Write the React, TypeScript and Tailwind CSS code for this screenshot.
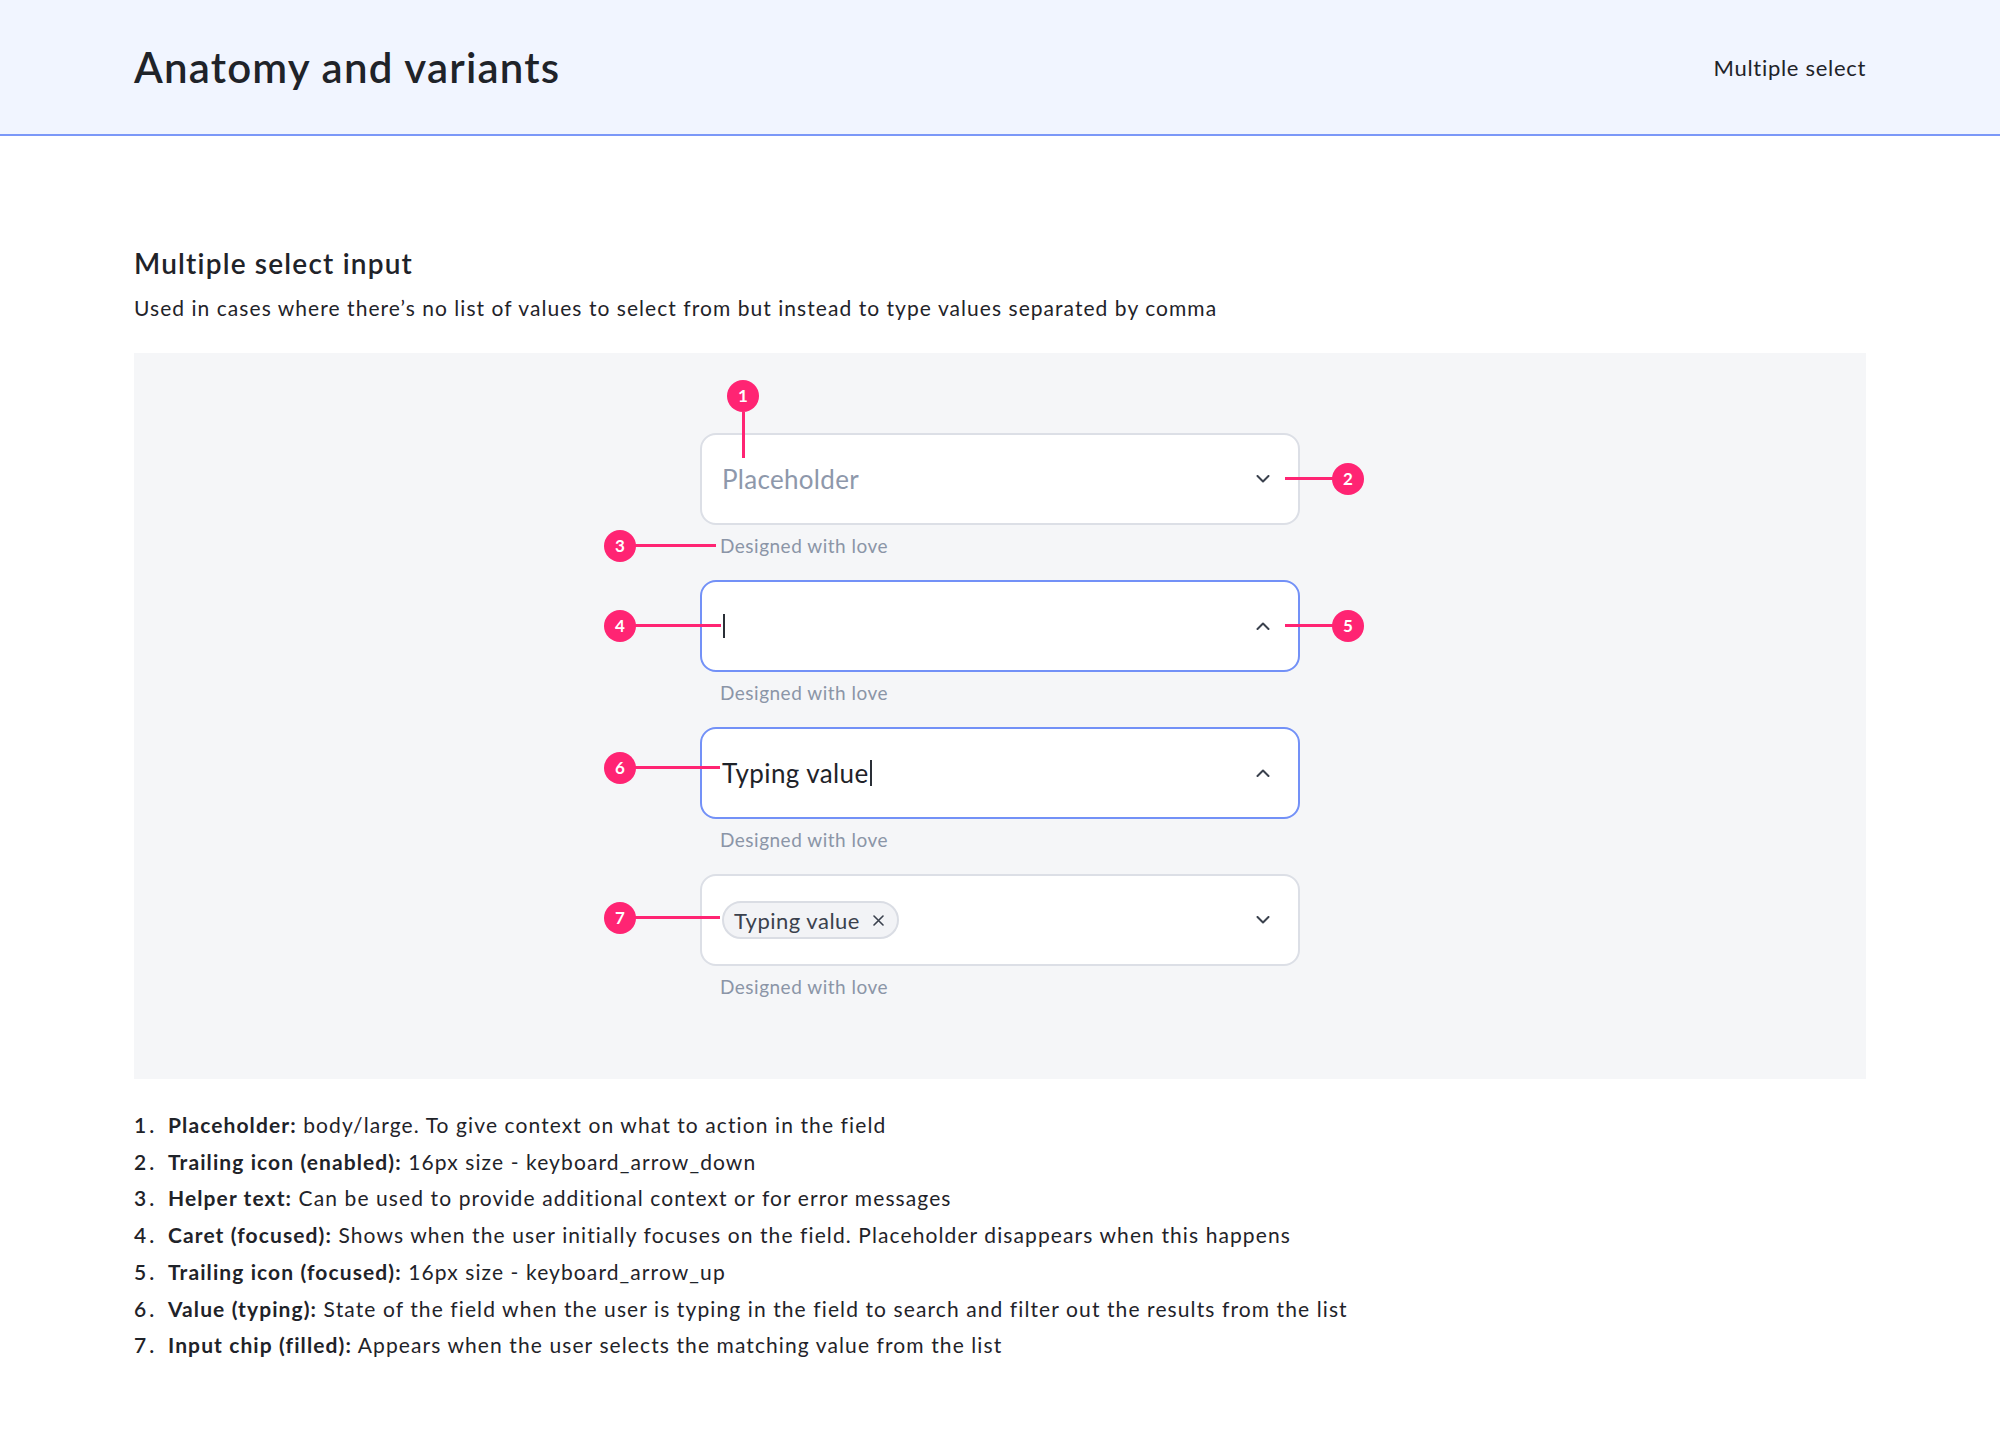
import React from 'react';

const PINK = 'bg-[#ff2473]';

function Badge({ n, className }: { n: number; className: string }) {
  return (
    <div
      className={`absolute w-8 h-8 rounded-full ${PINK} text-white text-[17px] font-bold flex items-center justify-center ${className}`}
    >
      {n}
    </div>
  );
}

function Chevron({ up = false }: { up?: boolean }) {
  return (
    <svg width="14" height="8" viewBox="0 0 14 8" className="shrink-0">
      <polyline
        points={up ? '1.5,7 7,1.5 12.5,7' : '1.5,1 7,6.5 12.5,1'}
        fill="none"
        stroke="#3a414d"
        strokeWidth="2"
        strokeLinecap="round"
        strokeLinejoin="round"
      />
    </svg>
  );
}

function Helper() {
  return (
    <div className="mt-[9px] pl-[20px] text-[19px] leading-[24px] tracking-[0.5px] text-[#8b95a7]">
      Designed with love
    </div>
  );
}

const NOTES: [string, string][] = [
  ['Placeholder:', 'body/large. To give context on what to action in the field'],
  ['Trailing icon (enabled):', '16px size - keyboard_arrow_down'],
  ['Helper text:', 'Can be used to provide additional context or for error messages'],
  ['Caret (focused):', 'Shows when the user initially focuses on the field. Placeholder disappears when this happens'],
  ['Trailing icon (focused):', '16px size - keyboard_arrow_up'],
  ['Value (typing):', 'State of the field when the user is typing in the field to search and filter out the results from the list'],
  ['Input chip (filled):', 'Appears when the user selects the matching value from the list'],
];

export default function App() {
  const field = 'h-[92px] rounded-[16px] border-2 bg-white flex items-center justify-between pl-[20px] pr-[28px]';

  return (
    <div className="min-h-screen bg-white font-['Lato',sans-serif] text-[#1f2329]">
      <header className="h-[136px] bg-[#f1f5ff] border-b-2 border-[#7b98f8] px-[134px] flex items-center justify-between">
        <h1 className="text-[42px] font-semibold tracking-[1.2px]">Anatomy and variants</h1>
        <span className="text-[22px] tracking-[0.7px]">Multiple select</span>
      </header>

      <main className="px-[134px] pb-[60px]">
        <h2 className="mt-[111px] text-[28px] leading-[32px] font-semibold tracking-[1.2px]">Multiple select input</h2>
        <p className="mt-[14px] text-[21px] leading-[30px] tracking-[1.05px]">
          Used in cases where there’s no list of values to select from but instead to type values separated by comma
        </p>

        <div className="mt-[30px] bg-[#f5f6f8] pt-[80px] pb-[80px] flex flex-col items-center gap-[22px]">
          {/* 1 - placeholder */}
          <div className="relative w-[600px]">
            <div className={`${field} border-[#dcdfe6]`}>
              <span className="text-[26px] tracking-[0.3px] text-[#8e98ab]">Placeholder</span>
              <Chevron />
            </div>
            <Helper />
            <Badge n={1} className="left-[27px] -top-[53px]" />
            <div className={`absolute left-[42px] -top-[21px] w-[3px] h-[46px] ${PINK}`} />
            <Badge n={2} className="left-[632px] top-[30px]" />
            <div className={`absolute left-[585px] top-[44px] w-[48px] h-[3px] ${PINK}`} />
            <Badge n={3} className="-left-[96px] top-[97px]" />
            <div className={`absolute -left-[65px] top-[111px] w-[81px] h-[3px] ${PINK}`} />
          </div>

          {/* 2 - focused */}
          <div className="relative w-[600px]">
            <div className={`${field} border-[#7391f7]`}>
              <span className="w-[2px] h-[24px] bg-[#2a2f36] ml-[1px]" />
              <Chevron up />
            </div>
            <Helper />
            <Badge n={4} className="-left-[96px] top-[30px]" />
            <div className={`absolute -left-[65px] top-[44px] w-[86px] h-[3px] ${PINK}`} />
            <Badge n={5} className="left-[632px] top-[30px]" />
            <div className={`absolute left-[585px] top-[44px] w-[48px] h-[3px] ${PINK}`} />
          </div>

          {/* 3 - typing */}
          <div className="relative w-[600px]">
            <div className={`${field} border-[#7391f7]`}>
              <span className="flex items-center text-[26px] tracking-[0.4px] text-[#1f2329]">
                Typing value
                <span className="w-[2px] h-[26px] bg-[#2a2f36] ml-[1px]" />
              </span>
              <Chevron up />
            </div>
            <Helper />
            <Badge n={6} className="-left-[96px] top-[25px]" />
            <div className={`absolute -left-[65px] top-[39px] w-[85px] h-[3px] ${PINK}`} />
          </div>

          {/* 4 - chip */}
          <div className="relative w-[600px]">
            <div className={`${field} border-[#dcdfe6]`}>
              <span className="h-[38px] rounded-full bg-[#f2f3f6] border-2 border-[#dadde4] flex items-center gap-[13px] pl-[10px] pr-[13px] text-[22px] tracking-[0.5px] text-[#3a414d]">
                Typing value
                <svg width="11" height="11" viewBox="0 0 11 11">
                  <path d="M1 1 L10 10 M10 1 L1 10" stroke="#3a414d" strokeWidth="1.6" strokeLinecap="round" />
                </svg>
              </span>
              <Chevron />
            </div>
            <Helper />
            <Badge n={7} className="-left-[96px] top-[28px]" />
            <div className={`absolute -left-[65px] top-[42px] w-[85px] h-[3px] ${PINK}`} />
          </div>
        </div>

        <ol className="mt-[28px] text-[21px] leading-[36.7px] tracking-[1.1px]">
          {NOTES.map(([label, text], i) => (
            <li key={label} className="flex">
              <span className="w-[34px] shrink-0 font-semibold tracking-[3px]">{i + 1}.</span>
              <span>
                <span className="font-bold">{label}</span> {text}
              </span>
            </li>
          ))}
        </ol>
      </main>
    </div>
  );
}
